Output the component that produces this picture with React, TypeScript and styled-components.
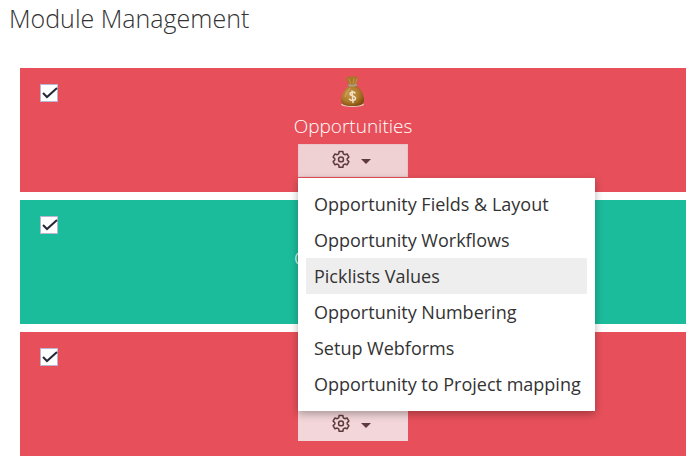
import React, { useState } from "react";
import styled, { createGlobalStyle } from "styled-components";

const GlobalStyle = createGlobalStyle`
  * { box-sizing: border-box; }
  body {
    margin: 0;
    background: #fff;
    color: #333;
    font-family: "Open Sans", "Noto Sans", sans-serif;
  }
`;

const Page = styled.main`
  padding: 0 13px 3px 9px;
`;

const Title = styled.h1`
  margin: 0;
  height: 68px;
  font-size: 25px;
  line-height: 36px;
  font-weight: 300;
`;

const ModuleList = styled.div`
  display: flex;
  flex-direction: column;
  gap: 8px;
  padding-left: 11px;
`;

const Card = styled.section<{ $color: string }>`
  display: grid;
  grid-template-columns: 20px 1fr 20px;
  min-height: 124px;
  padding-bottom: 15px;
  background: ${(p) => p.$color};
`;

const CheckCell = styled.label`
  display: flex;
  align-items: flex-start;
  justify-content: flex-start;
  padding: 16px 0 0 20px;
`;

const CheckInput = styled.input`
  appearance: none;
  flex: none;
  width: 18px;
  height: 18px;
  margin: 0;
  border: 1px solid #b9b5d2;
  background: #fff;
`;

const CheckMark = styled.svg`
  flex: none;
  width: 18px;
  height: 18px;
  margin-left: -18px;
  pointer-events: none;
  visibility: hidden;
  ${CheckInput}:checked + & { visibility: visible; }
`;

const CardBody = styled.div`
  display: grid;
  grid-template-rows: 42px 34px 33px;
  justify-items: center;
`;

const IconSlot = styled.div`
  padding-top: 8px;
`;

const ModuleName = styled.div`
  color: #fff;
  font-size: 19px;
  line-height: 32px;
  font-weight: 300;
`;

const MenuAnchor = styled.div`
  position: relative;
  width: 110px;
`;

const SettingsButton = styled.button<{ $open: boolean }>`
  display: flex;
  align-items: center;
  justify-content: center;
  gap: 10px;
  width: 100%;
  height: 33px;
  padding: 0 2px 3px 0;
  border: 1px solid ${(p) => (p.$open ? "#e9c5c9" : "#f3d6d9")};
  border-radius: 0;
  background: ${(p) => (p.$open ? "#efd1d4" : "#f3d6d9")};
  color: #5e3a3e;
`;

const Caret = styled.svg`
  margin-top: 6px;
`;

const Menu = styled.ul`
  position: absolute;
  z-index: 2;
  top: 34px;
  left: 0;
  margin: 0;
  padding: 8px 8px 9px;
  list-style: none;
  background: #fff;
  box-shadow: 0 3px 8px rgba(0, 0, 0, 0.3);
`;

const MenuLink = styled.a<{ $active: boolean }>`
  display: block;
  padding: 0 6px 0 8px;
  background: ${(p) => (p.$active ? "#eee" : "transparent")};
  color: #333;
  font-size: 18px;
  line-height: 36px;
  white-space: nowrap;
  text-decoration: none;
`;

const MoneyBag = () => (
  <svg width="26" height="34" viewBox="0 0 26 34" aria-hidden="true">
    <defs>
      <radialGradient id="bag" cx="40%" cy="40%" r="65%">
        <stop offset="0" stopColor="#c8964a" />
        <stop offset="0.6" stopColor="#b07a2c" />
        <stop offset="1" stopColor="#80500f" />
      </radialGradient>
    </defs>
    <ellipse cx="12.500" cy="28.500" rx="11.500" ry="2.400" fill="#e9c5bd" />
    <path d="M9 10C4.500 13 1 19 1 24c0 4.500 3 6 11.500 6S24 28.500 24 24c0-5-3-11-7.500-14z" fill="url(#bag)" />
    <path d="M8.500 9 6.500 3C6 1.500 8 .500 10 1 12-.5 14 0 15 1c2-.7 3.500.3 3 2l-1.500 6z" fill="#a9752b" />
    <path d="m9 3 2 5m3-6-1 6m4-5-2 5" stroke="#c4924a" fill="none" />
    <path d="M8.500 9c3 1 5.500 1 8.500-.3" stroke="#a8a18e" strokeWidth="2" fill="none" />
    <path d="M5 21c1-4 3-7 5-9" stroke="#d8ac68" strokeWidth="1.500" fill="none" opacity=".6" />
    <path d="M15 17c-1-1.500-5-1.200-5 1s5.500 1.600 5.500 4.200-4.500 2.800-6 1M12 15l1 11.500" stroke="#f0e3c7" strokeWidth="1.500" fill="none" strokeLinecap="round" />
  </svg>
);

const Gear = () => (
  <svg width="18" height="18" viewBox="0 0 24 24" fill="none" stroke="currentColor" strokeWidth="2" strokeLinejoin="round" aria-hidden="true">
    <path d="M9.500 2h5l.6 3.100 2 1.200 3-1 2.400 4.200-2.300 2.100v1.800l2.300 2.100-2.400 4.200-3-1-2 1.200-.6 3.100h-5l-.6-3.100-2-1.200-3 1-2.400-4.200 2.300-2.100v-1.800L1.500 9.500l2.400-4.200 3 1 2-1.200z" />
    <circle cx="12" cy="12.500" r="3.300" />
  </svg>
);

const menuItems = [
  "Opportunity Fields & Layout",
  "Opportunity Workflows",
  "Picklists Values",
  "Opportunity Numbering",
  "Setup Webforms",
  "Opportunity to Project mapping",
];

type Module = { name?: string; color: string; icon?: React.ReactNode };

const modules: Module[] = [
  { name: "Opportunities", color: "#e7505a", icon: <MoneyBag /> },
  { name: "Organizations", color: "#1bbc9b" },
  { color: "#e7505a" },
];

function ModuleCard({ module, open, onToggle }: { module: Module; open: boolean; onToggle: () => void }) {
  return (
    <Card $color={module.color}>
      <CheckCell>
        <CheckInput type="checkbox" defaultChecked aria-label={module.name ?? "Module"} />
        <CheckMark viewBox="0 0 18 18" fill="none" stroke="#252936" strokeWidth="2">
          <path d="m3 9 4 4L17 4" />
        </CheckMark>
      </CheckCell>
      <CardBody>
        <IconSlot>{module.icon}</IconSlot>
        <ModuleName>{module.name}</ModuleName>
        <MenuAnchor>
          <SettingsButton type="button" $open={open} aria-label="Module settings" aria-expanded={open} onClick={onToggle}>
            <Gear />
            <Caret width="12" height="6" viewBox="0 0 12 6" aria-hidden="true">
              <path d="M1 0h10L6 5z" fill="currentColor" />
            </Caret>
          </SettingsButton>
          {open && (
            <Menu>
              {menuItems.map((item) => (
                <li key={item}>
                  <MenuLink href="#" $active={item === "Picklists Values"}>{item}</MenuLink>
                </li>
              ))}
            </Menu>
          )}
        </MenuAnchor>
      </CardBody>
    </Card>
  );
}

export default function App() {
  const [openIndex, setOpenIndex] = useState(0);
  return (
    <>
      <GlobalStyle />
      <Page>
        <Title>Module Management</Title>
        <ModuleList>
          {modules.map((module, i) => (
            <ModuleCard
              key={i}
              module={module}
              open={openIndex === i}
              onToggle={() => setOpenIndex(openIndex === i ? -1 : i)}
            />
          ))}
        </ModuleList>
      </Page>
    </>
  );
}
